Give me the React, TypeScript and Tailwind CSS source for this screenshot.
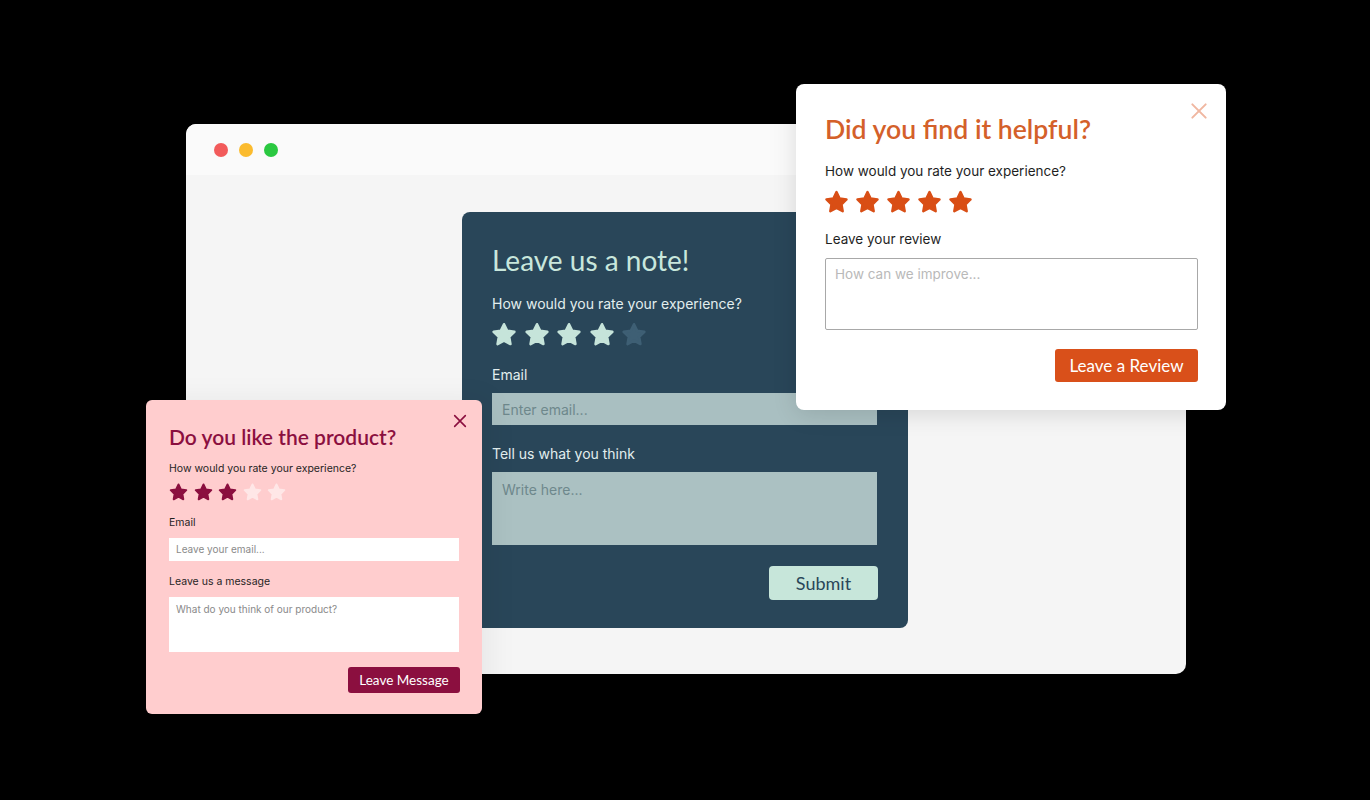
const STAR = "M12 2.8l2.75 5.6 6.15.9-4.45 4.35 1.05 6.1L12 16.85l-5.5 2.9 1.05-6.1L3.1 9.3l6.15-.9z";

function Star({ size, color }: { size: number; color: string }) {
  return (
    <svg width={size} height={size} viewBox="0 0 24 24" className="shrink-0">
      <path d={STAR} fill={color} stroke={color} strokeWidth={2.2} strokeLinejoin="round" />
    </svg>
  );
}

function Stars({ count, filled, size, gap, on, off }: { count: number; filled: number; size: number; gap: string; on: string; off: string }) {
  return (
    <div className={`flex ${gap}`}>
      {Array.from({ length: count }).map((_, i) => (
        <Star key={i} size={size} color={i < filled ? on : off} />
      ))}
    </div>
  );
}

function Close({ color, size }: { color: string; size: number }) {
  return (
    <svg width={size} height={size} viewBox="0 0 24 24" fill="none" stroke={color} strokeWidth={2.4} strokeLinecap="round">
      <path d="M4 4l16 16M20 4L4 20" />
    </svg>
  );
}

const lato = "font-['Lato','Liberation_Sans',sans-serif]";
const inter = "font-['Inter','Liberation_Sans',sans-serif]";

export default function App() {
  return (
    <div className="relative w-[1370px] h-[800px] bg-black overflow-hidden">
      {/* browser window */}
      <div className="absolute left-[186px] top-[124px] w-[1000px] h-[550px] rounded-[10px] overflow-hidden bg-[#f5f5f5] flex flex-col">
        <div className="h-[51px] bg-[#fafafa] flex items-center gap-[11px] pl-[28px]">
          <span className="w-[14px] h-[14px] rounded-full bg-[#f25b5b]" />
          <span className="w-[14px] h-[14px] rounded-full bg-[#fbbb2e]" />
          <span className="w-[14px] h-[14px] rounded-full bg-[#2ac840]" />
        </div>
      </div>

      {/* dark card */}
      <div className={`absolute left-[462px] top-[212px] w-[446px] h-[416px] rounded-[8px] bg-[#294659] pl-[30px] pr-[30px] pt-[30px] ${inter}`}>
        <h2 className={`${lato} text-[28px] leading-[36px] text-[#c8e7dc]`}>Leave us a note!</h2>
        <p className="mt-[16px] text-[14px] leading-[20px] text-[#e2eeee]">How would you rate your experience?</p>
        <div className="mt-[7px] -ml-[2px]">
          <Stars count={5} filled={4} size={28} gap="gap-[4.5px]" on="#c6e4da" off="#3e5f74" />
        </div>
        <p className="mt-[16px] text-[14px] leading-[20px] text-[#e2eeee]">Email</p>
        <div className="mt-[8px] w-[385px] h-[32px] bg-[#a9bfc1] flex items-center pl-[10px] text-[14px] text-[#6e888c]">Enter email...</div>
        <p className="mt-[19px] text-[14px] leading-[20px] text-[#e2eeee]">Tell us what you think</p>
        <div className="mt-[8px] w-[385px] h-[73px] bg-[#abc1c2] pl-[10px] pt-[7px] text-[14px] text-[#6e888c]">Write here...</div>
        <div className="mt-[21px] w-[386px] flex justify-end">
          <div className={`${lato} w-[109px] h-[34px] rounded-[4px] bg-[#c7e6da] flex items-center justify-center text-[18px] text-[#2a4759]`}>Submit</div>
        </div>
      </div>

      {/* orange card */}
      <div className={`absolute left-[796px] top-[84px] w-[430px] h-[326px] rounded-[8px] bg-white shadow-[0_4px_24px_rgba(0,0,0,0.12)] pl-[29px] pr-[29px] pt-[28px] ${inter}`}>
        <div className="absolute right-[17px] top-[17px]">
          <Close color="#f0b7a1" size={20} />
        </div>
        <h2 className={`${lato} font-semibold text-[26.6px] leading-[34px] text-[#d4602a]`}>Did you find it helpful?</h2>
        <p className="mt-[15px] text-[13.5px] leading-[20px] text-[#1f1f1f]">How would you rate your experience?</p>
        <div className="mt-[8px] -ml-[2px]">
          <Stars count={5} filled={5} size={27} gap="gap-[4px]" on="#d94e15" off="#d94e15" />
        </div>
        <p className="mt-[13px] text-[13.5px] leading-[20px] text-[#1f1f1f]">Leave your review</p>
        <div className="mt-[9px] w-[373px] h-[72px] border border-[#a8a8a8] rounded-[2px] pl-[9px] pt-[5px] text-[13.5px] text-[#b9b9b9]">How can we improve...</div>
        <div className="mt-[19px] w-[373px] flex justify-end">
          <div className={`${lato} w-[143px] h-[33px] rounded-[3px] bg-[#d9501a] flex items-center justify-center text-[17px] text-white`}>Leave a Review</div>
        </div>
      </div>

      {/* pink card */}
      <div className={`absolute left-[146px] top-[400px] w-[336px] h-[314px] rounded-[6px] bg-[#ffcdce] shadow-[8px_0_30px_rgba(0,0,0,0.06)] pl-[23px] pt-[24px] ${inter}`}>
        <div className="absolute right-[14px] top-[13px]">
          <Close color="#8b0f3f" size={16} />
        </div>
        <h2 className={`${lato} font-semibold text-[21px] leading-[26px] text-[#8b0f3f]`}>Do you like the product?</h2>
        <p className="mt-[12px] text-[10.5px] leading-[14px] text-[#1f1f1f]">How would you rate your experience?</p>
        <div className="mt-[6px] -ml-[1px]">
          <Stars count={5} filled={3} size={21} gap="gap-[3.5px]" on="#8b0f3f" off="#ffe7e7" />
        </div>
        <p className="mt-[13px] text-[10.5px] leading-[14px] text-[#1f1f1f]">Email</p>
        <div className="mt-[8px] w-[290px] h-[23px] bg-white flex items-center pl-[7px] text-[10px] text-[#8a8a8a]">Leave your email...</div>
        <p className="mt-[14px] text-[10.5px] leading-[14px] text-[#1f1f1f]">Leave us a message</p>
        <div className="mt-[8px] w-[290px] h-[55px] bg-white pl-[7px] pt-[5px] text-[10px] text-[#8a8a8a]">What do you think of our product?</div>
        <div className="mt-[15px] w-[291px] flex justify-end">
          <div className={`${lato} w-[112px] h-[26px] rounded-[3px] bg-[#8b0f3f] flex items-center justify-center text-[13.5px] text-white`}>Leave Message</div>
        </div>
      </div>
    </div>
  );
}
